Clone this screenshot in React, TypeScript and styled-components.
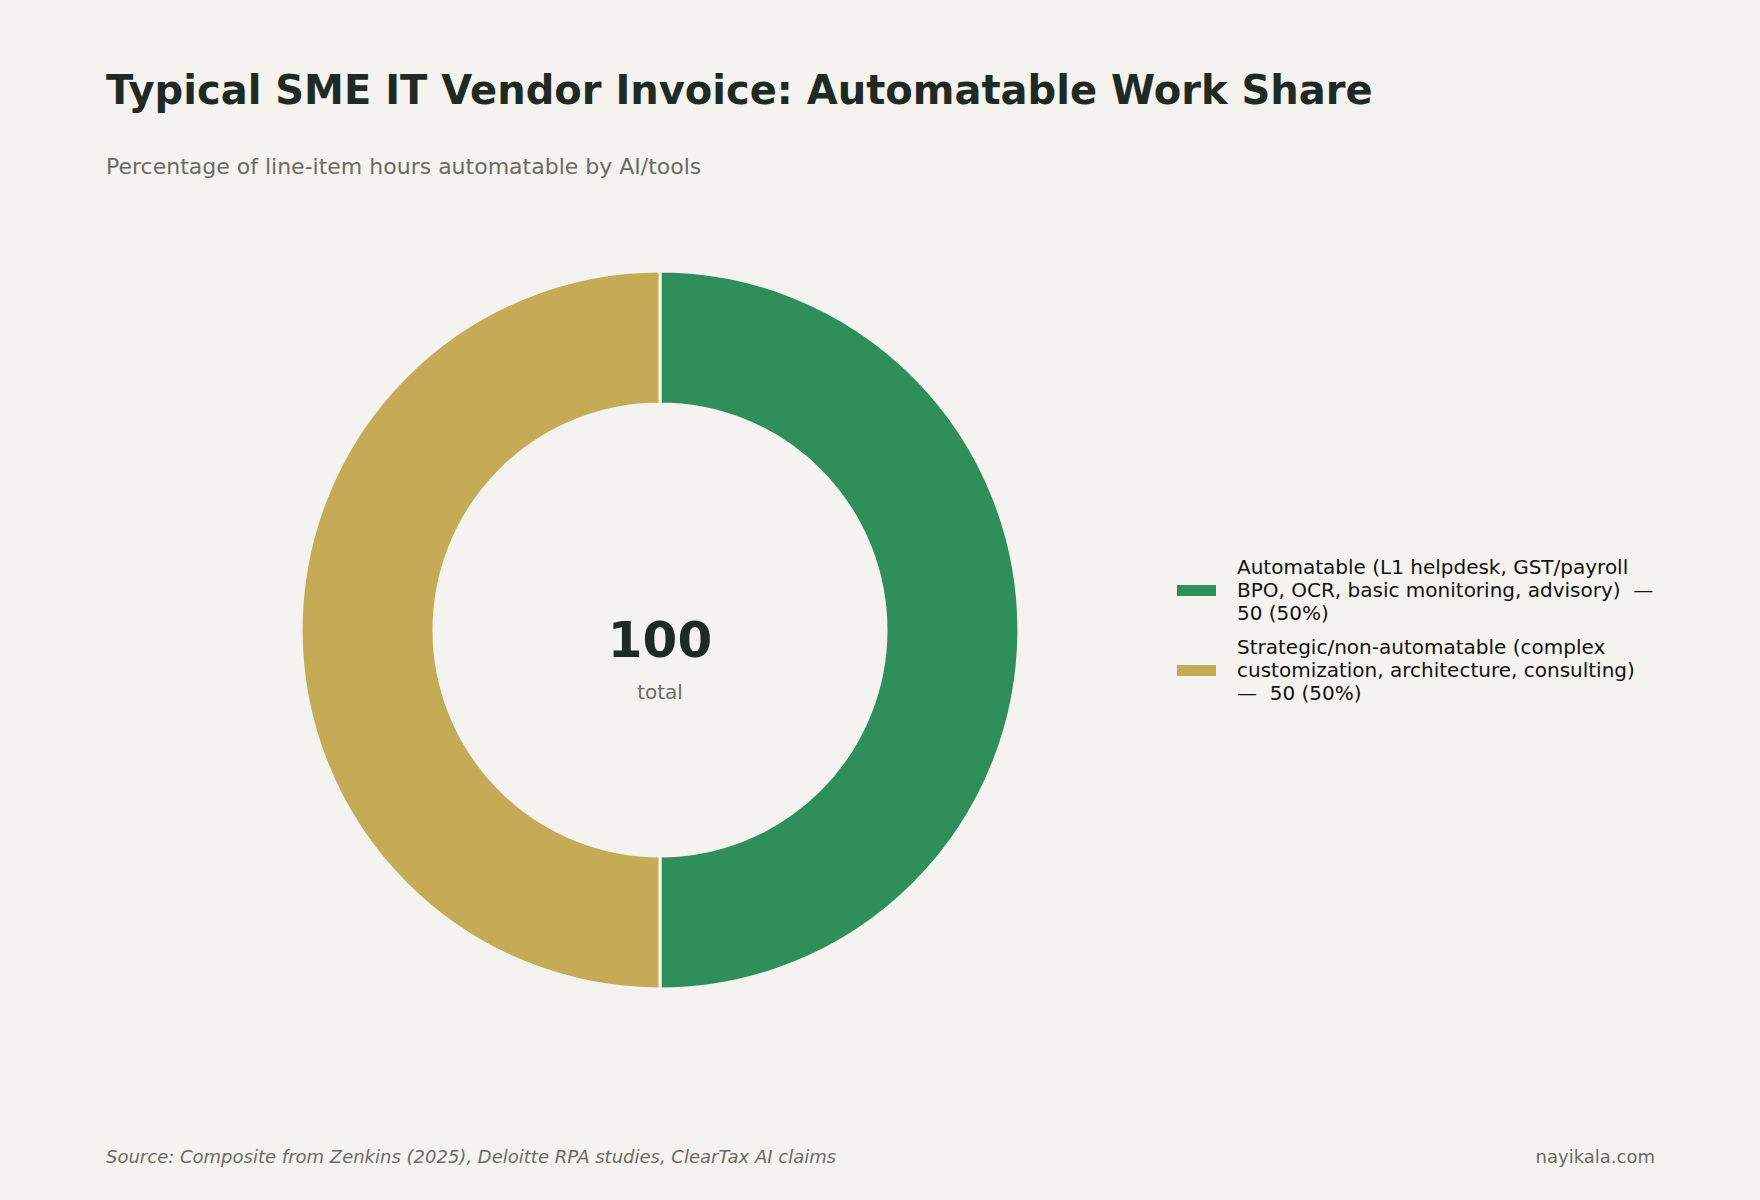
import React from 'react'
import styled, { createGlobalStyle } from 'styled-components'

const Global = createGlobalStyle`
  html, body { margin: 0; background: #f4f3ef; }
  body { font-family: "DejaVu Sans", "Liberation Sans", sans-serif; }
`

const Page = styled.div`
  width: 1760px;
  height: 1200px;
  box-sizing: border-box;
  padding: 66px 105px 0 106px;
  display: flex;
  flex-direction: column;
  background: #f4f3ef;
`

const Title = styled.h1`
  margin: 0;
  font-size: 40px;
  line-height: 48px;
  font-weight: bold;
  color: #1f2a24;
`

const Subtitle = styled.div`
  margin-top: 40px;
  font-size: 22px;
  line-height: 26px;
  color: #6b6b66;
`

const ChartRow = styled.div`
  margin-top: 90px;
  display: flex;
  align-items: center;
`

const DonutWrap = styled.div`
  position: relative;
  margin-left: 194px;
  width: 720px;
  height: 720px;
`

const Center = styled.div`
  position: absolute;
  inset: 0;
  display: flex;
  flex-direction: column;
  align-items: center;
  justify-content: center;
`

const Total = styled.div`
  font-size: 50px;
  line-height: 56px;
  font-weight: bold;
  color: #1f2a24;
  margin-top: 56px;
`

const TotalLabel = styled.div`
  font-size: 20px;
  line-height: 24px;
  color: #6b6b66;
  margin-top: 12px;
`

const Legend = styled.div`
  margin-left: 157px;
  display: flex;
  flex-direction: column;
  gap: 11px;
`

const LegendItem = styled.div`
  display: flex;
  align-items: center;
`

const Swatch = styled.span<{ $color: string }>`
  width: 39px;
  height: 11px;
  background: ${(p) => p.$color};
  margin-right: 21px;
  flex-shrink: 0;
`

const LegendText = styled.div`
  font-size: 20px;
  line-height: 23px;
  color: #111;
  white-space: pre;
`

const Footer = styled.div`
  margin-top: 156px;
  display: flex;
  justify-content: space-between;
  font-size: 18px;
  line-height: 22px;
  color: #6b6b66;
`

const Source = styled.span`
  font-style: italic;
`

const cx = 360
const cy = 360
const R = 359
const r = 226

const half = (dir: 1 | -1) =>
  `M ${cx} ${cy - R} A ${R} ${R} 0 0 ${dir === 1 ? 1 : 0} ${cx} ${cy + R} L ${cx} ${cy + r} A ${r} ${r} 0 0 ${dir === 1 ? 0 : 1} ${cx} ${cy - r} Z`

const data = [
  { color: '#2e8f5b', lines: ['Automatable (L1 helpdesk, GST/payroll', 'BPO, OCR, basic monitoring, advisory)  —', '50 (50%)'] },
  { color: '#c6ab57', lines: ['Strategic/non-automatable (complex', 'customization, architecture, consulting)', '—  50 (50%)'] },
]

export default function App() {
  return (
    <Page>
      <Global />
      <Title>Typical SME IT Vendor Invoice: Automatable Work Share</Title>
      <Subtitle>Percentage of line-item hours automatable by AI/tools</Subtitle>
      <ChartRow>
        <DonutWrap>
          <svg width="720" height="720" viewBox="0 0 720 720">
            <path d={half(1)} fill="#2e8f5b" stroke="#f4f3ef" strokeWidth="3" />
            <path d={half(-1)} fill="#c6ab57" stroke="#f4f3ef" strokeWidth="3" />
          </svg>
          <Center>
            <Total>100</Total>
            <TotalLabel>total</TotalLabel>
          </Center>
        </DonutWrap>
        <Legend>
          {data.map((d, i) => (
            <LegendItem key={i}>
              <Swatch $color={d.color} />
              <LegendText>{d.lines.join('\n')}</LegendText>
            </LegendItem>
          ))}
        </Legend>
      </ChartRow>
      <Footer>
        <Source>Source: Composite from Zenkins (2025), Deloitte RPA studies, ClearTax AI claims</Source>
        <span>nayikala.com</span>
      </Footer>
    </Page>
  )
}
